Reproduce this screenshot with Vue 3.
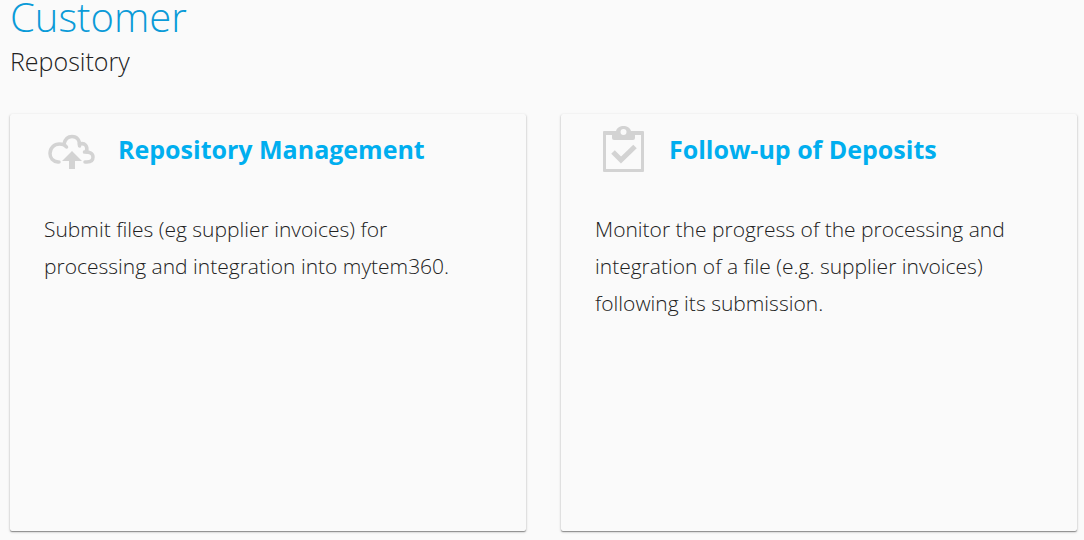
<template>
  <div class="page">
    <header class="header">
      <h1>Customer</h1>
      <h2>Repository</h2>
    </header>
    <main class="cards">
      <section v-for="card in cards" :key="card.title" class="card">
        <div class="card-head">
          <svg v-if="card.icon === 'upload'" class="icon" viewBox="0 -1 50 50" aria-hidden="true">
            <g fill="none" stroke="#d3d3d3" stroke-width="3.500" stroke-linecap="round">
              <path d="M15 37H14C9 36.500 6 33 6 28.500C6 23 10 19 15.500 19C18.500 19 21 20 22.500 22" />
              <path d="M20 19C21 14.500 24 11.500 28 11.500C33 11.500 36 15 35.500 21" />
              <path d="M35.500 19C41 17.500 44 21 42.500 27" />
              <path d="M40.500 27C45.500 26.500 49 28.500 49 32C49 35.500 46.500 37 43 37H41" />
            </g>
            <path fill="#d3d3d3" d="M28 26L38 36H31V44H25V36H18Z" />
          </svg>
          <svg v-else class="icon" viewBox="0 -1 50 50" aria-hidden="true">
            <path
              fill="#d3d3d3"
              fill-rule="evenodd"
              d="M9 6H21C22 2.500 25 1 28.500 1S35 2.500 36 6H48Q49 6 49 7V46Q49 47 48 47H9Q8 47 8 46V7Q8 6 9 6ZM11 10V44H46V10H40V13Q40 15 38 15H19Q17 15 17 13V10ZM28.500 4A3 3 0 1 0 28.500 10A3 3 0 1 0 28.500 4Z"
            />
            <path fill="none" stroke="#d3d3d3" stroke-width="5" d="M18 27L26 35L40 21.500" />
          </svg>
          <h3>{{ card.title }}</h3>
        </div>
        <p>{{ card.text }}</p>
      </section>
    </main>
  </div>
</template>

<script setup>
const cards = [
  {
    icon: 'upload',
    title: 'Repository Management',
    text: 'Submit files (eg supplier invoices) for processing and integration into mytem360.'
  },
  {
    icon: 'clipboard',
    title: 'Follow-up of Deposits',
    text: 'Monitor the progress of the processing and integration of a file (e.g. supplier invoices) following its submission.'
  }
]
</script>

<style>
body {
  margin: 0;
  background: #fafafa;
}
</style>

<style scoped>
.page {
  padding: 0 7px 8px 10px;
  font-family: 'Open Sans', sans-serif;
  font-weight: 300;
  color: #212121;
}

.header {
  margin-bottom: 35px;
}

h1,
h2,
h3,
p {
  margin: 0;
}

h1 {
  font-size: 40px;
  font-weight: 300;
  line-height: 34px;
  color: #0a9bd8;
}

h2 {
  padding-top: 9px;
  font-size: 25px;
  font-weight: 300;
  line-height: 36px;
}

.cards {
  display: grid;
  grid-template-columns: 1fr 1fr;
  gap: 35px;
}

.card {
  box-sizing: border-box;
  min-height: 417px;
  padding: 10px 34px;
  border-radius: 2px;
  background: #fafafa;
  box-shadow: 0 1px 3px rgba(0, 0, 0, 0.2), 0 1px 1px rgba(0, 0, 0, 0.35);
}

.card-head {
  display: flex;
  align-items: center;
  gap: 24px;
}

.icon {
  flex: none;
  width: 50px;
  height: 50px;
  overflow: visible;
}

h3 {
  font-size: 25px;
  font-weight: 700;
  line-height: 50px;
  color: #00aeef;
}

p {
  padding-top: 37px;
  font-size: 21px;
  line-height: 37px;
}
</style>
